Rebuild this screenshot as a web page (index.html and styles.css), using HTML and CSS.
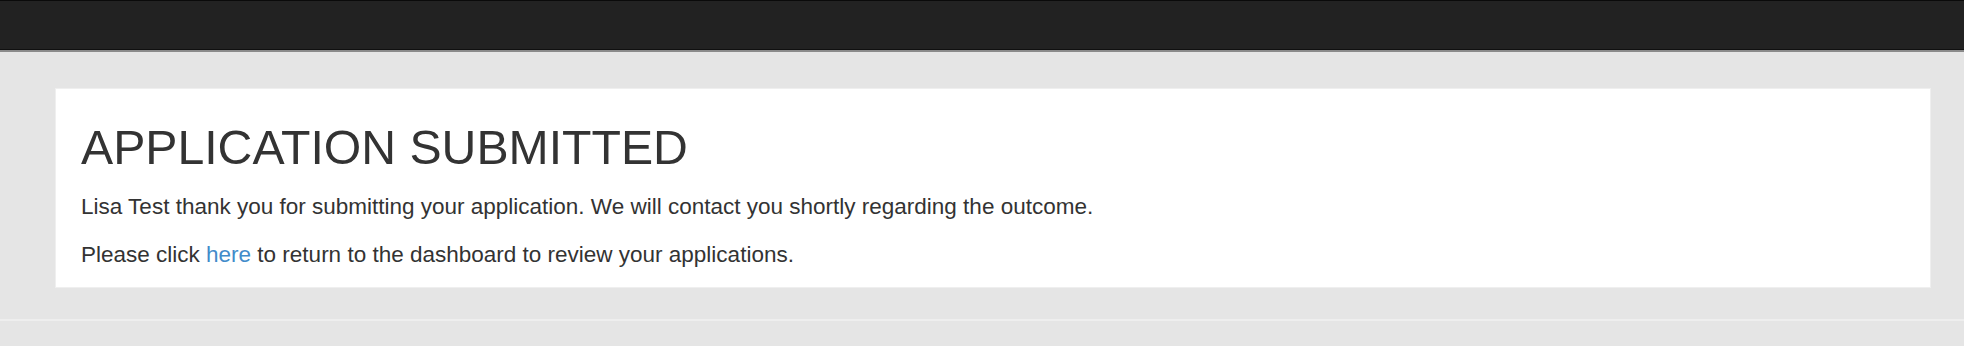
FILE: index.html
```html
<!DOCTYPE html>
<html lang="en">
<head>
    <meta charset="UTF-8">
    <meta name="viewport" content="width=device-width, initial-scale=1.0">
    <title>Application Submitted</title>
    <link rel="stylesheet" href="styles.css">
</head>
<body>
    <div class="navbar"></div>

    <div class="container">
        <div class="panel">
            <h1>APPLICATION SUBMITTED</h1>
            <p>Lisa Test thank you for submitting your application. We will contact you shortly regarding the outcome.</p>
            <p>Please click <a href="#">here</a> to return to the dashboard to review your applications.</p>
        </div>
    </div>

    <div class="footer"></div>
</body>
</html>
```

FILE: styles.css
```css
body {
    background-color: #e5e5e5;
    color: #333333;
    font-family: "Liberation Sans", Arial, sans-serif;
    margin: 0;
}
.navbar {
    height: 48px;
    background-color: #222222;
    border-top: 1px solid #0a0a0a;
    border-bottom: 1px solid #101010;
    box-shadow: 0 2px 0 #8a8a8a;
}
.container {
    padding: 38px 33px 0 55px;
}
.panel {
    background-color: #ffffff;
    border: 1px solid #efefef;
    padding: 32px 25px 16px 25px;
}
h1 {
    margin: 0 0 17px 0;
    font-size: 48.2px;
    font-weight: normal;
    line-height: 1.1;
    color: #333333;
}
p {
    margin: 0;
    font-size: 22.5px;
    line-height: 32px;
}
p + p {
    margin-top: 16px;
}
a {
    color: #428bca;
    text-decoration: none;
}
.footer {
    margin-top: 31px;
    height: 27px;
    border-top: 2px solid #eeeeee;
}
```
